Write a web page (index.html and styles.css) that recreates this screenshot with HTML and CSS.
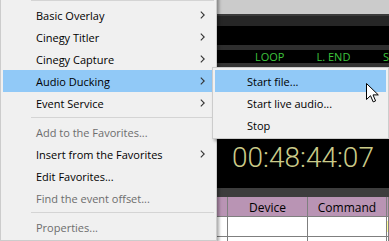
FILE: index.html
```html
<!DOCTYPE html>
<html>
<head>
<meta charset="utf-8">
<link rel="stylesheet" href="styles.css">
</head>
<body>
<div class="app">
  <div class="topbar"></div>
  <div class="rule-a"></div>
  <div class="band-a"></div>
  <div class="black-a"></div>
  <div class="band-b"></div>
  <div class="status">
    <span class="lbl l1">LOOP</span>
    <span class="lbl l2">L. END</span>
    <span class="lbl l3">S</span>
  </div>
  <div class="band-c"></div>
  <div class="clock"><span class="tc">00:48:44:07</span></div>
  <div class="band-d"></div>
  <div class="grid">
    <div class="th"></div>
    <div class="th">Device</div>
    <div class="th">Command</div>
    <div class="th"></div>
    <div class="td"></div>
    <div class="td"></div>
    <div class="td"></div>
    <div class="td"><div class="mark"></div></div>
    <div class="td"></div>
    <div class="td"></div>
    <div class="td"></div>
    <div class="td"></div>
  </div>
</div>

<div class="menu main">
  <div class="sep"></div>
  <div class="item"><span>Basic Overlay</span><svg class="chev" width="5" height="8" viewBox="0 0 5 8"><polyline points="0.8,0.6 4.2,4 0.8,7.4"/></svg></div>
  <div class="item"><span>Cinegy Titler</span><svg class="chev" width="5" height="8" viewBox="0 0 5 8"><polyline points="0.8,0.6 4.2,4 0.8,7.4"/></svg></div>
  <div class="item"><span>Cinegy Capture</span><svg class="chev" width="5" height="8" viewBox="0 0 5 8"><polyline points="0.8,0.6 4.2,4 0.8,7.4"/></svg></div>
  <div class="item hl"><span>Audio Ducking</span><svg class="chev" width="5" height="8" viewBox="0 0 5 8"><polyline points="0.8,0.6 4.2,4 0.8,7.4"/></svg></div>
  <div class="item"><span>Event Service</span><svg class="chev" width="5" height="8" viewBox="0 0 5 8"><polyline points="0.8,0.6 4.2,4 0.8,7.4"/></svg></div>
  <div class="sep"></div>
  <div class="item dis"><span>Add to the Favorites...</span></div>
  <div class="item"><span>Insert from the Favorites</span><svg class="chev" width="5" height="8" viewBox="0 0 5 8"><polyline points="0.8,0.6 4.2,4 0.8,7.4"/></svg></div>
  <div class="item"><span>Edit Favorites...</span></div>
  <div class="item dis"><span>Find the event offset...</span></div>
  <div class="sep"></div>
  <div class="item dis"><span>Properties...</span></div>
</div>

<div class="menu sub">
  <div class="item hl"><span>Start file...</span></div>
  <div class="item"><span>Start live audio...</span></div>
  <div class="item"><span>Stop</span></div>
</div>

<svg class="cursor" width="14" height="21" viewBox="0 0 14 21">
  <path d="M0.5,0.5 L0.5,16.5 L4.5,12.7 L7.2,18.9 L9.6,17.9 L7,11.9 L12.3,11.9 Z" fill="#fff" stroke="#000" stroke-width="1" stroke-linejoin="miter"/>
</svg>
</body>
</html>
```

FILE: styles.css
```css
html, body {
  margin: 0;
  padding: 0;
}
body {
  width: 389px;
  height: 241px;
  overflow: hidden;
  position: relative;
  background: #000;
  font-family: "Open Sans", "Noto Sans", sans-serif;
}

/* background application */
.app {
  display: flex;
  flex-direction: column;
  width: 389px;
}
.topbar { height: 14px; background: #cbcbcb; }
.rule-a { height: 2px; background: #3b3b3b; }
.band-a { height: 10px; background: #262626; }
.black-a { height: 19px; background: #000; }
.band-b { height: 5px; background: #2e2e2e; }
.status {
  height: 13px;
  background: #000;
  display: flex;
  align-items: center;
  padding-left: 255px;
  color: #3ec43e;
  font-size: 11px;
  line-height: 13px;
  white-space: nowrap;
}
.lbl { display: block; }
.l1 { width: 62px; }
.l2 { width: 67px; }
.band-c { height: 4px; background: #333; }
.clock {
  height: 121px;
  box-sizing: border-box;
  padding-top: 76px;
  padding-left: 217px;
  background: #000;
  display: flex;
  justify-content: center;
  align-items: flex-start;
}
.tc {
  font-family: Roboto, "Open Sans", sans-serif;
  font-weight: 300;
  font-size: 28px;
  line-height: 30px;
  color: #cbcb89;
}
.band-d { height: 9px; background: #3d3d3d; }

.grid {
  display: grid;
  grid-template-columns: 228px 80px 79px 1fr;
  grid-auto-rows: 20px;
  background: #fff;
}
.th, .td {
  box-sizing: border-box;
  border-right: 1px solid #7f7f7f;
  border-bottom: 1px solid #7f7f7f;
}
.th {
  background: #b994b4;
  font-size: 12px;
  color: #000;
  display: flex;
  align-items: center;
  justify-content: center;
  padding-top: 1px;
}
.td { background: #fff; }
.mark {
  height: 11px;
  margin-top: 4px;
  background: #ffff9a;
}

/* context menus */
.menu {
  position: absolute;
  background: #f0f0f0;
  border: 1px solid #cccccc;
  padding: 2px;
  box-shadow: 2px 2px 3px rgba(0, 0, 0, 0.35);
  font-family: "Open Sans", "Noto Sans", sans-serif;
  font-size: 11px;
  color: #000;
}
.main {
  left: 0;
  top: -6px;
  width: 211px;
}
.sub {
  left: 212px;
  top: 67px;
  width: 171px;
}
.item {
  height: 22px;
  display: flex;
  align-items: center;
  justify-content: space-between;
  padding-left: 33px;
  padding-right: 9px;
  white-space: nowrap;
}
.sub .item { padding-left: 32px; }
.item.hl { background: #91c9f7; }
.item.dis { color: #6d6d6d; }
.chev {
  display: block;
  fill: none;
  stroke: #333;
  stroke-width: 1.1;
}
.sep {
  height: 7px;
  display: flex;
  align-items: center;
  padding-left: 28px;
}
.sep::before {
  content: "";
  flex: 1;
  height: 1px;
  background: #d4d4d4;
}

.cursor {
  position: absolute;
  left: 366px;
  top: 83px;
}
```
